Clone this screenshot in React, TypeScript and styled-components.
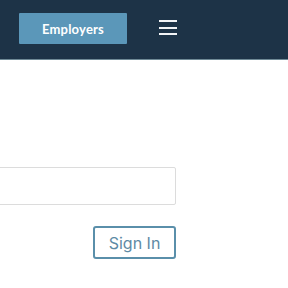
import React from 'react';
import styled, { createGlobalStyle } from 'styled-components';

const GlobalStyle = createGlobalStyle`
	html, body {
		margin: 0;
		padding: 0;
		background: #ffffff;
		font-family: Lato, "Open Sans", sans-serif;
		overflow: hidden;
	}
`;

/**
 * Sign in page fragment
 */
const App: React.FC = () => {
	return (
		<>
			<GlobalStyle />
			<Header>
				<EmployersButton>Employers</EmployersButton>
				<MenuButton aria-label="Menu">
					<MenuLine />
					<MenuLine />
					<MenuLine />
				</MenuButton>
			</Header>
			<Main>
				<Form>
					<TextInput type="email" />
					<SignInButton>Sign In</SignInButton>
				</Form>
			</Main>
		</>
	);
};
export default App;

// Styles
const Header = styled.header`
	display: flex;
	align-items: flex-start;
	gap: 32px;
	box-sizing: border-box;
	height: 60px;
	padding: 13px 0 0 19px;
	background: #1d3347;
	border-bottom: 1px solid #6f8a96;
`;

const EmployersButton = styled.button`
	width: 108px;
	height: 31px;
	border: none;
	border-radius: 1px;
	background: #5b97b9;
	color: #ffffff;
	font-family: Lato, sans-serif;
	font-weight: 700;
	font-size: 13px;
	letter-spacing: 0.2px;
	cursor: pointer;
`;

const MenuButton = styled.button`
	display: flex;
	flex-direction: column;
	gap: 4.5px;
	margin-top: 7px;
	padding: 0;
	background: none;
	border: none;
	cursor: pointer;
`;

const MenuLine = styled.span`
	display: block;
	width: 18px;
	height: 2px;
	background: #f2f4f6;
`;

const Main = styled.main`
	padding-top: 107px;
`;

const Form = styled.div`
	display: flex;
	flex-direction: column;
	align-items: flex-end;
	gap: 21px;
	width: 216px;
	margin-left: -40px;
`;

const TextInput = styled.input`
	width: 100%;
	height: 38px;
	box-sizing: border-box;
	border: 1px solid #dcdcdc;
	border-radius: 2px;
	background: #ffffff;
	outline: none;
`;

const SignInButton = styled.button`
	width: 83px;
	height: 33px;
	box-sizing: border-box;
	border: 2px solid #5a8faa;
	border-radius: 3px;
	background: #ffffff;
	color: #5e8aa5;
	font-family: Inter, sans-serif;
	font-size: 16px;
	cursor: pointer;
`;
